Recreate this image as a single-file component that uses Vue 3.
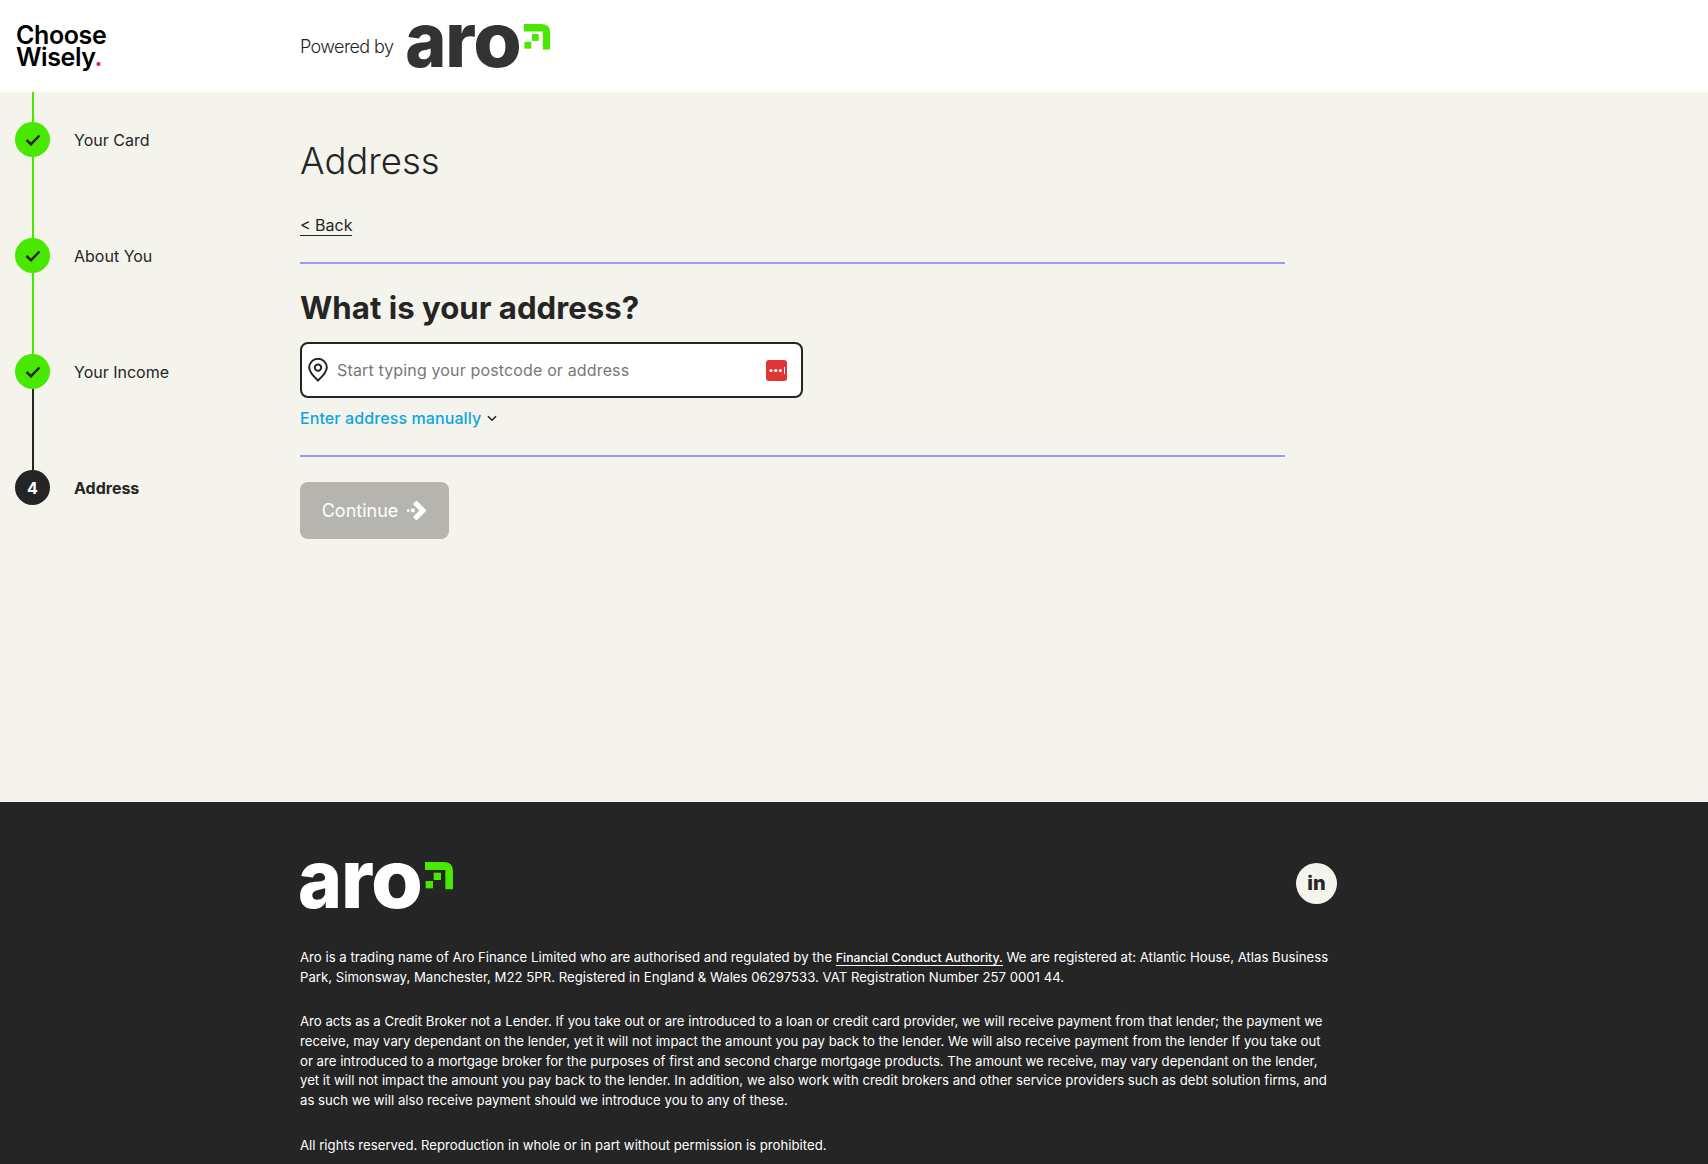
<template>
  <div class="page">
    <header class="top">
      <div class="brand">Choose<br />Wisely<span class="dot">.</span></div>
      <div class="powered">
        <span>Powered by</span>
        <svg class="aro aro-dark" viewBox="0 0 153 47" width="143" height="44">
          <text y="46" font-size="82"><tspan x="-2" textLength="44" lengthAdjust="spacingAndGlyphs">a</tspan><tspan x="41" textLength="33" lengthAdjust="spacingAndGlyphs">r</tspan><tspan x="71" textLength="52" lengthAdjust="spacingAndGlyphs">o</tspan></text>
          <g transform="translate(125 0) scale(.3333)">
            <path d="M0 0H56Q84 0 84 27V82H61V24H0Z" />
            <rect x="26" y="32" width="22" height="22" />
            <rect x="2" y="57" width="22" height="22" />
          </g>
        </svg>
      </div>
    </header>

    <div class="body">
      <aside class="steps">
        <template v-for="(step, i) in steps" :key="step.label">
          <div class="line" :class="{ first: i === 0, done: step.done }"></div>
          <div class="step" :class="{ current: !step.done }">
            <div class="bubble">
              <svg v-if="step.done" width="16" height="12" viewBox="0 0 16 12" fill="none">
                <path d="M1.5 6l4.5 4.2L14.5 1.5" stroke="#252525" stroke-width="2.4" />
              </svg>
              <template v-else>{{ i + 1 }}</template>
            </div>
            <span>{{ step.label }}</span>
          </div>
        </template>
      </aside>

      <main class="main">
        <h1>Address</h1>
        <a class="back">&lt; Back</a>
        <hr />
        <h2>What is your address?</h2>
        <div class="field">
          <svg width="20" height="24" viewBox="0 0 20 24" fill="none" stroke="#252525" stroke-width="2">
            <path d="M10 22.6C5 18 1.2 14.2 1.2 9.6a8.8 8.8 0 0 1 17.6 0c0 4.6-3.8 8.4-8.8 13z" />
            <circle cx="10" cy="9.6" r="3.2" />
          </svg>
          <input type="text" placeholder="Start typing your postcode or address" />
          <svg width="21" height="21" viewBox="0 0 21 21">
            <rect width="21" height="21" rx="3" fill="#df3535" />
            <circle cx="5" cy="10.5" r="1.6" fill="#fff" />
            <circle cx="9.7" cy="10.5" r="1.6" fill="#fff" />
            <circle cx="14.4" cy="10.5" r="1.6" fill="#fff" />
            <rect x="18" y="7" width="1" height="7" fill="#fff" />
          </svg>
        </div>
        <div class="manual">
          <a>Enter address manually</a>
          <svg width="10" height="7" viewBox="0 0 10 7" fill="none">
            <path d="M1 1.2l4 4 4-4" stroke="#252525" stroke-width="1.6" />
          </svg>
        </div>
        <hr class="second" />
        <button class="continue" type="button">
          Continue
          <svg width="21" height="21" viewBox="0 0 21 21" fill="#fff">
            <path d="M10.5.5l10 10-10 10-3.6-3.6 6.4-6.4-6.4-6.4z" />
            <rect x="5" y="8.6" width="3.6" height="3.6" />
            <rect x="1" y="9.3" width="2.4" height="2.4" />
          </svg>
        </button>
      </main>
    </div>

    <footer class="foot">
      <div class="foot-top">
        <svg class="aro aro-light" viewBox="0 0 153 47" width="153" height="47">
          <text y="46" font-size="82"><tspan x="-2" textLength="44" lengthAdjust="spacingAndGlyphs">a</tspan><tspan x="41" textLength="33" lengthAdjust="spacingAndGlyphs">r</tspan><tspan x="71" textLength="52" lengthAdjust="spacingAndGlyphs">o</tspan></text>
          <g transform="translate(125 0) scale(.3333)">
            <path d="M0 0H56Q84 0 84 27V82H61V24H0Z" />
            <rect x="26" y="32" width="22" height="22" />
            <rect x="2" y="57" width="22" height="22" />
          </g>
        </svg>
        <a class="social">in</a>
      </div>
      <p>
        Aro is a trading name of Aro Finance Limited who are authorised and regulated by the
        <a class="fca">Financial Conduct Authority.</a> We are registered at: Atlantic House, Atlas Business
        Park, Simonsway, Manchester, M22 5PR. Registered in England &amp; Wales 06297533. VAT Registration Number 257 0001 44.
      </p>
      <p>
        Aro acts as a Credit Broker not a Lender. If you take out or are introduced to a loan or credit card provider, we will receive payment from that lender; the payment we receive, may vary dependant on the lender, yet it will not impact the amount you pay back to the lender. We will also receive payment from the lender If you take out or are introduced to a mortgage broker for the purposes of first and second charge mortgage products. The amount we receive, may vary dependant on the lender, yet it will not impact the amount you pay back to the lender. In addition, we also work with credit brokers and other service providers such as debt solution firms, and as such we will also receive payment should we introduce you to any of these.
      </p>
      <p>All rights reserved. Reproduction in whole or in part without permission is prohibited.</p>
    </footer>
  </div>
</template>

<script setup>
const steps = [
  { label: 'Your Card', done: true },
  { label: 'About You', done: true },
  { label: 'Your Income', done: true },
  { label: 'Address', done: false }
]
</script>

<style>
html,
body {
  margin: 0;
  background: #252525;
}
</style>

<style scoped>
.page {
  font-family: Inter, "Liberation Sans", sans-serif;
  color: #252525;
  height: 1164px;
  overflow: hidden;
  display: flex;
  flex-direction: column;
}

.top {
  height: 92px;
  background: #fff;
  display: flex;
  align-items: center;
  flex-shrink: 0;
}

.brand {
  width: 284px;
  margin-left: 16px;
  font-size: 25px;
  line-height: 22px;
  font-weight: 600;
  letter-spacing: -0.4px;
  color: #000;
}

.dot {
  color: #e6175c;
}

.powered {
  display: flex;
  align-items: center;
  gap: 14px;
  font-size: 18px;
  font-weight: 300;
  letter-spacing: -0.6px;
}

.aro {
  overflow: visible;
}

.aro text {
  font-family: Inter, sans-serif;
  font-weight: 800;
  letter-spacing: 0;
}

.aro-dark text {
  fill: #333;
}

.aro-light text {
  fill: #fff;
}

.aro path,
.aro rect {
  fill: #48e800;
}

.body {
  height: 710px;
  background: #f4f3ec;
  display: flex;
  flex-shrink: 0;
}

.steps {
  width: 300px;
  padding-left: 15px;
  box-sizing: border-box;
}

.line {
  width: 2px;
  height: 81px;
  margin-left: 16.5px;
  background: #252525;
}

.line.first {
  height: 30px;
}

.line.done {
  background: #48e800;
}

.step {
  display: flex;
  align-items: center;
  gap: 24px;
  font-size: 16px;
}

.bubble {
  width: 35px;
  height: 35px;
  border-radius: 50%;
  background: #48e800;
  display: flex;
  align-items: center;
  justify-content: center;
}

.step.current {
  font-weight: 700;
}

.step.current .bubble {
  background: #252525;
  color: #fff;
}

.main {
  width: 985px;
}

h1 {
  margin: 47px 0 0;
  font-size: 36.5px;
  line-height: 44px;
  font-weight: 300;
}

.back {
  display: inline-block;
  margin-top: 32px;
  font-size: 16px;
  line-height: 20px;
  border-bottom: 1px solid #252525;
}

hr {
  margin: 26px 0 0;
  border: 0;
  height: 2px;
  background: #9d97fb;
}

h2 {
  margin: 24px 0 0;
  font-size: 31.2px;
  line-height: 40px;
  font-weight: 700;
}

.field {
  margin-top: 14px;
  width: 503px;
  height: 56px;
  box-sizing: border-box;
  border: 2px solid #252525;
  border-radius: 8px;
  background: #fff;
  display: flex;
  align-items: center;
  padding: 0 14px 0 6px;
  gap: 9px;
}

.field input {
  flex: 1;
  min-width: 0;
  border: 0;
  padding: 0;
  outline: 0;
  background: none;
  font: 16px Inter, sans-serif;
  letter-spacing: 0.15px;
}

.field input::placeholder {
  color: #777;
  opacity: 1;
}

.manual {
  margin-top: 10px;
  display: flex;
  align-items: center;
  gap: 6px;
  font-size: 16px;
  line-height: 20px;
  font-weight: 500;
  letter-spacing: 0.1px;
  color: #0da5e2;
}

.second {
  margin-top: 27px;
}

.continue {
  margin-top: 25px;
  width: 149px;
  height: 57px;
  border: 0;
  border-radius: 8px;
  background: #b5b4af;
  color: #fff;
  font: 400 18px Inter, sans-serif;
  display: flex;
  align-items: center;
  justify-content: center;
  gap: 8px;
  padding: 0;
}

.foot {
  flex: 1;
  background: #252525;
  color: #fff;
  padding: 60px 0 0 300px;
  font-size: 13.2px;
  line-height: 19.8px;
}

.foot-top {
  width: 1037px;
  display: flex;
  justify-content: space-between;
  align-items: flex-start;
  margin-bottom: 39px;
}

.social {
  width: 41px;
  height: 41px;
  margin-top: 1px;
  border-radius: 50%;
  background: #f4f3ec;
  color: #252525;
  font-size: 20px;
  font-weight: 800;
  display: flex;
  align-items: center;
  justify-content: center;
}

.foot p {
  width: 1037px;
  margin: 0 0 24.5px;
}

.fca {
  font-size: 12.3px;
  font-weight: 500;
  border-bottom: 1px solid #fff;
}
</style>
